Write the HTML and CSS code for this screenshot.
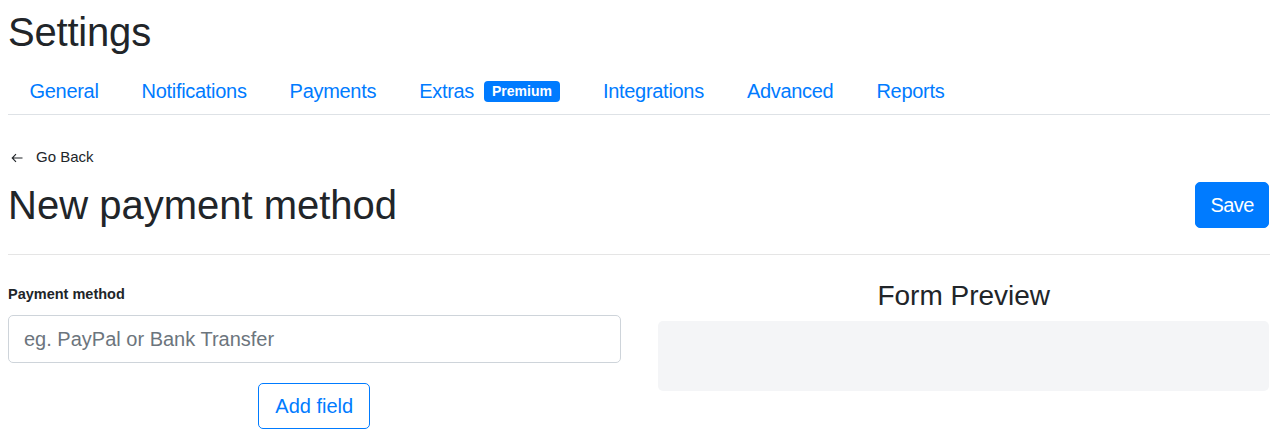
FILE: index.html
```html
<!DOCTYPE html>
<html lang="en">
<head>
<meta charset="utf-8">
<title>Settings</title>
<link rel="stylesheet" href="styles.css">
</head>
<body>
<h1 class="page-title">Settings</h1>
<nav class="tabs">
  <a class="tab" href="#">General</a>
  <a class="tab" href="#">Notifications</a>
  <a class="tab" href="#">Payments</a>
  <a class="tab" href="#">Extras <span class="badge">Premium</span></a>
  <a class="tab" href="#">Integrations</a>
  <a class="tab" href="#">Advanced</a>
  <a class="tab" href="#">Reports</a>
</nav>
<a class="back" href="#"><svg class="back-arrow" width="12" height="10" viewBox="0 0 12 10" aria-hidden="true"><path d="M11.5 5H1.2M5 1.2L1.2 5L5 8.8" fill="none" stroke="#212529" stroke-width="1.1"/></svg>Go Back</a>
<div class="header-row">
  <h2 class="heading">New payment method</h2>
  <button class="btn btn-primary" type="button">Save</button>
</div>
<hr class="divider">
<div class="columns">
  <div class="col-left">
    <label class="field-label" for="pm">Payment method</label>
    <input class="field-input" id="pm" type="text" placeholder="eg. PayPal or Bank Transfer">
    <div class="add-row">
      <button class="btn btn-outline" type="button">Add field</button>
    </div>
  </div>
  <div class="col-right">
    <h3 class="preview-title">Form Preview</h3>
    <div class="preview-box"></div>
  </div>
</div>
</body>
</html>
```

FILE: styles.css
```css
* { box-sizing: border-box; }
body {
  margin: 8px;
  font-family: "Liberation Sans", Arial, sans-serif;
  color: #212529;
  background: #fff;
}
.page-title {
  margin: 0 0 12px;
  font-size: 40px;
  line-height: 48px;
  font-weight: 400;
  letter-spacing: -0.2px;
}
.tabs {
  display: flex;
  align-items: center;
  border-bottom: 1px solid #dee2e6;
}
.tab {
  display: flex;
  align-items: center;
  padding: 8px 21.5px;
  font-size: 20px;
  line-height: 30px;
  color: #007bff;
  text-decoration: none;
  letter-spacing: -0.3px;
}
.badge {
  display: inline-block;
  margin-left: 10px;
  padding: 0 8px;
  height: 21px;
  line-height: 21px;
  font-size: 14px;
  font-weight: 700;
  color: #fff;
  background: #007bff;
  border-radius: 4px;
  letter-spacing: 0;
}
.back {
  display: flex;
  align-items: center;
  margin-top: 31px;
  font-size: 15px;
  line-height: 22px;
  color: #212529;
  text-decoration: none;
}
.back-arrow {
  margin-left: 3px;
  margin-right: 13px;
  margin-top: 1px;
}
.header-row {
  display: flex;
  align-items: center;
  justify-content: space-between;
  margin-top: 13px;
}
.heading {
  margin: 0;
  font-size: 40px;
  line-height: 48px;
  font-weight: 400;
}
.btn {
  font-family: inherit;
  font-size: 20px;
  line-height: 30px;
  padding: 7px 16px;
  border-radius: 5px;
  cursor: pointer;
}
.btn-primary {
  color: #fff;
  background: #007bff;
  border: 1px solid #007bff;
  margin-right: 1px;
  padding: 7px 14px;
  letter-spacing: -0.5px;
}
.btn-outline {
  color: #007bff;
  background: #fff;
  border: 1px solid #007bff;
}
.divider {
  margin: 25px 0 0;
  border: 0;
  border-top: 1px solid #e5e5e5;
}
.columns {
  display: grid;
  grid-template-columns: 1fr 1fr;
  column-gap: 37px;
  padding-top: 29px;
}
.col-left, .col-right {
  display: flex;
  flex-direction: column;
}
.field-label {
  font-size: 14.5px;
  line-height: 21px;
  font-weight: 700;
  margin-bottom: 10px;
}
.field-input {
  height: 48px;
  padding: 8px 15px;
  font-family: inherit;
  font-size: 20px;
  color: #495057;
  border: 1px solid #ced4da;
  border-radius: 5px;
  outline: none;
}
.field-input::placeholder { color: #6c757d; }
.add-row {
  display: flex;
  justify-content: center;
  margin-top: 20px;
}
.preview-title {
  margin: -5px 0 0;
  text-align: center;
  font-size: 28px;
  line-height: 34px;
  font-weight: 400;
}
.preview-box {
  margin-top: 8px;
  height: 70px;
  background: #f4f5f7;
  border-radius: 5px;
  margin-right: 1px;
}
```
